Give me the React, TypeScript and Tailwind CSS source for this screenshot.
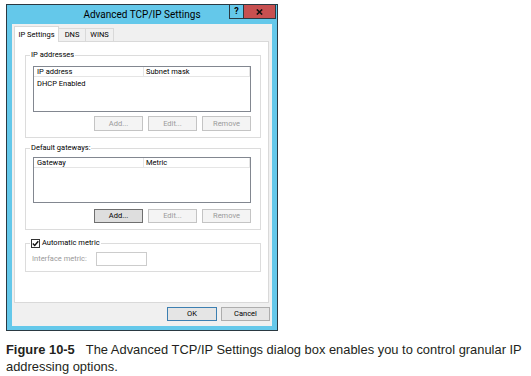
import React from "react";

const Btn = ({
  children,
  w = 49,
  variant = "disabled",
}: {
  children: React.ReactNode;
  w?: number;
  variant?: "disabled" | "focus" | "default" | "normal";
}) => {
  const cls =
    variant === "disabled"
      ? "border-[#c4c4c4] bg-[#f4f4f4] text-[#9a9a9a]"
      : variant === "focus"
      ? "border-[#6f6f6f] bg-[#dedede] text-black"
      : variant === "default"
      ? "border-[#3c7fb1] bg-[#e5e5e5] text-black"
      : "border-[#adadad] bg-[#e5e5e5] text-black";
  return (
    <div
      className={`flex h-full items-center justify-center border ${cls}`}
      style={{ width: w }}
    >
      {children}
    </div>
  );
};

const ListBox = ({ c1, c2, row }: { c1: string; c2: string; row?: string }) => (
  <div className="h-[46px] border border-[#828790] bg-white">
    <div className="flex h-[10px] border-b border-[#e5e5e5]">
      <div className="w-[110px] border-r border-[#e5e5e5] pl-[3px] leading-[9px]">{c1}</div>
      <div className="flex-1 border-r border-[#e5e5e5] pl-[2px] leading-[9px]">{c2}</div>
    </div>
    {row && <div className="mt-[1px] h-[11px] pl-[3px] leading-[11px]">{row}</div>}
  </div>
);

const Group = ({
  legend,
  children,
  className = "",
}: {
  legend: React.ReactNode;
  children: React.ReactNode;
  className?: string;
}) => (
  <fieldset className={`w-[236px] border border-[#dcdcdc] ${className}`}>
    <legend className="ml-[4px] px-[1px] leading-[10px]">{legend}</legend>
    {children}
  </fieldset>
);

export default function App() {
  return (
    <div className="h-[376px] w-[531px] overflow-hidden bg-white">
      <div className="ml-[6px] mt-[4px] flex h-[327px] w-[272px] flex-col border border-[#2a3942] bg-[#64c8ea]">
        {/* Title bar */}
        <div className="relative flex h-[19px] items-center justify-center font-['Roboto',sans-serif] text-[10px] text-black">
          <span className="-mt-[1px]">Advanced TCP/IP Settings</span>
          <div className="absolute right-[1px] top-[-1px] flex h-[15px]">
            <div className="flex w-[15px] items-center justify-center border border-[#2a3942] bg-[#64c8ea] text-[9px] font-bold leading-none">
              ?
            </div>
            <div className="-ml-[1px] flex w-[33px] items-center justify-center border border-[#2a3942] bg-[#c75050] text-[9px] font-bold leading-none text-[#1a1a1a]">
              <svg width="7" height="6" viewBox="0 0 7 6">
                <path d="M0.8 0.5 L6.2 5.5 M6.2 0.5 L0.8 5.5" stroke="#111" strokeWidth="1.6" />
              </svg>
            </div>
          </div>
        </div>

        {/* Body */}
        <div className="mx-[5px] flex h-[302px] flex-col bg-[#f0f0f0] pl-[2px] pt-[2px] font-['Roboto',sans-serif] text-[7.5px] text-black">
          {/* Tabs */}
          <div className="flex h-[15px] items-end">
            <div className="relative z-10 -mb-[1px] flex h-[16px] w-[45px] items-center justify-center border-l border-r border-t border-[#d9d9d9] bg-white">
              IP Settings
            </div>
            <div className="flex h-[13px] w-[27px] items-center justify-center border-r border-t border-[#d9d9d9] bg-[#f0f0f0]">
              DNS
            </div>
            <div className="flex h-[13px] w-[28px] items-center justify-center border-r border-t border-[#d9d9d9] bg-[#f0f0f0]">
              WINS
            </div>
          </div>

          {/* Panel */}
          <div className="flex h-[262px] w-[255px] flex-col border border-[#d9d9d9] bg-white pl-[10px] pt-[8px]">
            <Group legend="IP addresses">
              <div className="pb-[6px] pl-[7px] pr-[9px] pt-[6px]">
                <ListBox c1="IP address" c2="Subnet mask" row="DHCP Enabled" />
                <div className="mt-[4px] flex h-[15px] justify-end gap-[5px]">
                  <Btn>Add...</Btn>
                  <Btn>Edit...</Btn>
                  <Btn>Remove</Btn>
                </div>
              </div>
            </Group>

            <Group legend="Default gateways:" className="mt-[5px]">
              <div className="pb-[6px] pl-[7px] pr-[9px] pt-[4px]">
                <ListBox c1="Gateway" c2="Metric" />
                <div className="mt-[6px] flex h-[14px] justify-end gap-[5px]">
                  <Btn variant="focus">Add...</Btn>
                  <Btn>Edit...</Btn>
                  <Btn>Remove</Btn>
                </div>
              </div>
            </Group>

            <Group
              className="mt-[8px]"
              legend={
                <span className="flex items-center gap-[2px]">
                  <span className="flex h-[9px] w-[9px] items-center justify-center border border-[#333] bg-white">
                    <svg width="7" height="7" viewBox="0 0 7 7">
                      <path d="M0.8 3.6 L2.7 5.5 L6.3 1.2" fill="none" stroke="#111" strokeWidth="1.4" />
                    </svg>
                  </span>
                  <span>Automatic metric</span>
                </span>
              }
            >
              <div className="flex items-center pb-[5px] pl-[6px] pt-[4px]">
                <span className="w-[64px] text-[#9a9a9a]">Interface metric:</span>
                <div className="h-[14px] w-[51px] border border-[#cccccc] bg-white" />
              </div>
            </Group>
          </div>

          {/* Bottom buttons */}
          <div className="mt-[4px] flex h-[14px] justify-end gap-[4px] pr-[2px]">
            <Btn w={50} variant="default">OK</Btn>
            <Btn w={49} variant="normal">Cancel</Btn>
          </div>
        </div>
      </div>

      {/* Caption */}
      <div className="ml-[6px] mt-[10px] w-[525px] font-['Liberation_Sans',Arial,sans-serif] text-[12.9px] leading-[17px] text-[#231f20]">
        <span className="mr-[11px] font-bold">Figure 10-5</span>
        The Advanced TCP/IP Settings dialog box enables you to control granular IP
        <br />
        addressing options.
      </div>
    </div>
  );
}
